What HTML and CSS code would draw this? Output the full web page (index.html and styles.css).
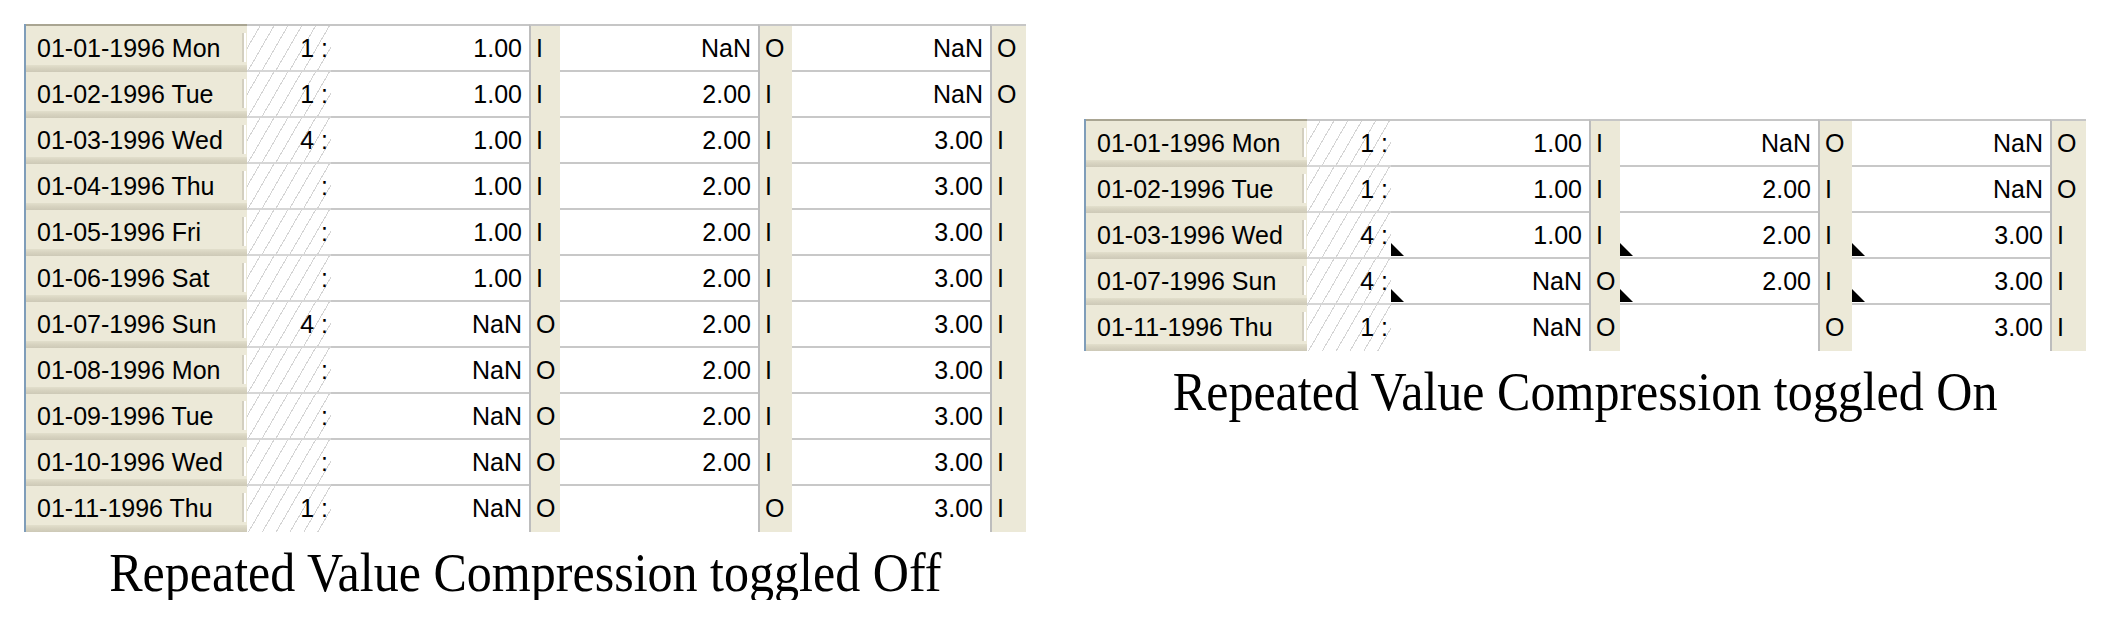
FILE: index.html
```html
<!DOCTYPE html>
<html>
<head>
<meta charset="utf-8">
<link rel="stylesheet" href="styles.css">
</head>
<body>
<div class="page">
  <div class="block">
    <div class="grid">
      <div class="row"><div class="hdr">01-01-1996 Mon</div><div class="cnt">1 :</div><div class="val">1.00</div><div class="flg">I</div><div class="val">NaN</div><div class="flg">O</div><div class="val">NaN</div><div class="flg">O</div></div>
      <div class="row"><div class="hdr">01-02-1996 Tue</div><div class="cnt">1 :</div><div class="val">1.00</div><div class="flg">I</div><div class="val">2.00</div><div class="flg">I</div><div class="val">NaN</div><div class="flg">O</div></div>
      <div class="row"><div class="hdr">01-03-1996 Wed</div><div class="cnt">4 :</div><div class="val">1.00</div><div class="flg">I</div><div class="val">2.00</div><div class="flg">I</div><div class="val">3.00</div><div class="flg">I</div></div>
      <div class="row"><div class="hdr">01-04-1996 Thu</div><div class="cnt">:</div><div class="val">1.00</div><div class="flg">I</div><div class="val">2.00</div><div class="flg">I</div><div class="val">3.00</div><div class="flg">I</div></div>
      <div class="row"><div class="hdr">01-05-1996 Fri</div><div class="cnt">:</div><div class="val">1.00</div><div class="flg">I</div><div class="val">2.00</div><div class="flg">I</div><div class="val">3.00</div><div class="flg">I</div></div>
      <div class="row"><div class="hdr">01-06-1996 Sat</div><div class="cnt">:</div><div class="val">1.00</div><div class="flg">I</div><div class="val">2.00</div><div class="flg">I</div><div class="val">3.00</div><div class="flg">I</div></div>
      <div class="row"><div class="hdr">01-07-1996 Sun</div><div class="cnt">4 :</div><div class="val">NaN</div><div class="flg">O</div><div class="val">2.00</div><div class="flg">I</div><div class="val">3.00</div><div class="flg">I</div></div>
      <div class="row"><div class="hdr">01-08-1996 Mon</div><div class="cnt">:</div><div class="val">NaN</div><div class="flg">O</div><div class="val">2.00</div><div class="flg">I</div><div class="val">3.00</div><div class="flg">I</div></div>
      <div class="row"><div class="hdr">01-09-1996 Tue</div><div class="cnt">:</div><div class="val">NaN</div><div class="flg">O</div><div class="val">2.00</div><div class="flg">I</div><div class="val">3.00</div><div class="flg">I</div></div>
      <div class="row"><div class="hdr">01-10-1996 Wed</div><div class="cnt">:</div><div class="val">NaN</div><div class="flg">O</div><div class="val">2.00</div><div class="flg">I</div><div class="val">3.00</div><div class="flg">I</div></div>
      <div class="row"><div class="hdr">01-11-1996 Thu</div><div class="cnt">1 :</div><div class="val">NaN</div><div class="flg">O</div><div class="val"></div><div class="flg">O</div><div class="val">3.00</div><div class="flg">I</div></div>
    </div>
    <div class="caption"><span class="caption-text">Repeated Value Compression toggled Off</span></div>
  </div>

  <div class="block block-right">
    <div class="grid">
      <div class="row"><div class="hdr">01-01-1996 Mon</div><div class="cnt">1 :</div><div class="val">1.00</div><div class="flg">I</div><div class="val">NaN</div><div class="flg">O</div><div class="val">NaN</div><div class="flg">O</div></div>
      <div class="row"><div class="hdr">01-02-1996 Tue</div><div class="cnt">1 :</div><div class="val">1.00</div><div class="flg">I</div><div class="val">2.00</div><div class="flg">I</div><div class="val">NaN</div><div class="flg">O</div></div>
      <div class="row"><div class="hdr">01-03-1996 Wed</div><div class="cnt">4 :</div><div class="val mark">1.00</div><div class="flg">I</div><div class="val mark">2.00</div><div class="flg">I</div><div class="val mark">3.00</div><div class="flg">I</div></div>
      <div class="row"><div class="hdr">01-07-1996 Sun</div><div class="cnt">4 :</div><div class="val mark">NaN</div><div class="flg">O</div><div class="val mark">2.00</div><div class="flg">I</div><div class="val mark">3.00</div><div class="flg">I</div></div>
      <div class="row"><div class="hdr">01-11-1996 Thu</div><div class="cnt">1 :</div><div class="val">NaN</div><div class="flg">O</div><div class="val"></div><div class="flg">O</div><div class="val">3.00</div><div class="flg">I</div></div>
    </div>
    <div class="caption"><span class="caption-text">Repeated Value Compression toggled On</span></div>
  </div>
</div>
</body>
</html>
```

FILE: styles.css
```css
html, body {
  margin: 0;
  padding: 0;
  background: #ffffff;
}

.page {
  display: flex;
  align-items: flex-start;
  gap: 58px;
  padding: 24px 0 0 24px;
}

.block {
  display: flex;
  flex-direction: column;
  width: 1002px;
}

.block-right {
  margin-top: 95px;
}

.grid {
  border-left: 2px solid #7f9db9;
  font-family: "Liberation Sans", Arial, sans-serif;
  font-size: 25px;
  color: #000;
}

.row {
  display: grid;
  grid-template-columns: 221px 84px 198px 31px 198px 34px 198px 36px;
  height: 46px;
}

.row > div {
  box-sizing: border-box;
  height: 46px;
  line-height: 44px;
  white-space: nowrap;
  overflow: hidden;
}

.row:first-child {
  height: 48px;
}

.row:first-child > div {
  height: 48px;
  border-top: 2px solid #c6c6c6;
}

.row:first-child > .hdr {
  border-top-color: #a9a592;
}

.hdr {
  position: relative;
  background: linear-gradient(to bottom, #ece9d8 0, #ece9d8 calc(100% - 7px), #e2dfcc calc(100% - 7px), #d8d4c1 calc(100% - 4px), #cdc9b7 100%);
  padding-left: 11px;
}

.hdr::after {
  content: "";
  position: absolute;
  right: 3px;
  top: 7px;
  bottom: 10px;
  width: 2px;
  background: #d3cfbf;
  box-shadow: 2px 0 0 #ffffff;
}

.cnt {
  background-color: #ffffff;
  background-image: repeating-linear-gradient(-60deg, #ffffff 0, #ffffff 11px, #d4d4d4 11px, #d4d4d4 12px);
  text-align: right;
  padding-right: 3px;
  border-bottom: 2px solid #d6d6d6;
}

.val {
  position: relative;
  background: #ffffff;
  text-align: right;
  padding-right: 7px;
  border-bottom: 2px solid #c8c8c8;
}

.row:last-child > .val,
.row:last-child > .cnt {
  border-bottom: none;
}

.flg {
  background: #ece9d8;
  border-left: 2px solid #bdbdbd;
  padding-left: 5px;
}

.mark::before {
  content: "";
  position: absolute;
  left: 0;
  bottom: 1px;
  width: 0;
  height: 0;
  border-left: 13px solid #000;
  border-top: 13px solid transparent;
}

.caption {
  margin-top: 13px;
  text-align: center;
  font-family: "Liberation Serif", "Times New Roman", serif;
  font-size: 55px;
  line-height: 55px;
  color: #000;
}

.caption-text {
  display: inline-block;
  transform: scaleX(0.91);
  white-space: nowrap;
}
```
